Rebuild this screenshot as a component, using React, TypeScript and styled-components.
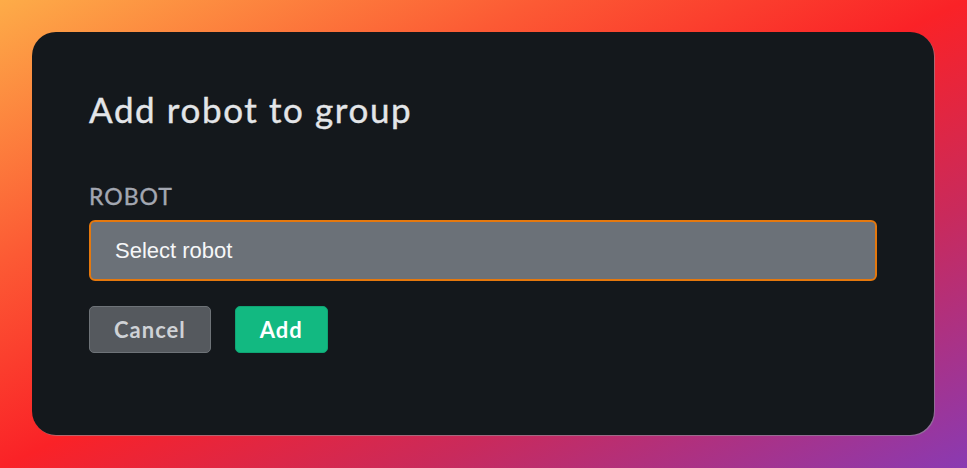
import React from 'react';
import styled, { createGlobalStyle } from 'styled-components';

const GlobalStyle = createGlobalStyle`
  html, body {
    margin: 0;
    padding: 0;
  }
  body {
    font-family: Lato, 'Noto Sans', sans-serif;
  }
  * {
    box-sizing: border-box;
  }
`;

const Backdrop = styled.div`
  width: 967px;
  height: 468px;
  padding: 32px 33px 33px 32px;
  background: linear-gradient(
    to bottom right,
    #fdac48 0%,
    #fc5a34 28%,
    #fa2227 50%,
    #c92a5c 72%,
    #8a3ab2 100%
  );
`;

const Card = styled.section`
  height: 100%;
  background: #14181c;
  border-radius: 24px;
  box-shadow: 1px 1px 0 rgba(140, 145, 152, 0.6);
  padding: 55px 57px 0 57px;
  display: flex;
  flex-direction: column;
`;

const Title = styled.h2`
  margin: 0;
  font-size: 35px;
  line-height: 44px;
  font-weight: 400;
  letter-spacing: 1.6px;
  color: #e3e5e8;
  -webkit-text-stroke: 0.4px #e3e5e8;
`;

const Label = styled.label`
  margin-top: 51px;
  font-size: 23px;
  line-height: 28px;
  font-weight: 400;
  letter-spacing: 1px;
  color: #a3a7b1;
  -webkit-text-stroke: 0.4px #a3a7b1;
`;

const Select = styled.div`
  margin-top: 10px;
  height: 61px;
  display: flex;
  align-items: center;
  padding: 0 24px;
  background: #6b7178;
  border: 2px solid #e5780d;
  border-radius: 6px;
  font-family: 'Liberation Sans', Arial, sans-serif;
  font-size: 22px;
  color: #f6f7f8;
`;

const Actions = styled.div`
  margin-top: 25px;
  display: flex;
  gap: 24px;
`;

const Button = styled.button<{ $primary?: boolean }>`
  height: 47px;
  padding: 0 24px;
  border-radius: 5px;
  font-family: Lato, 'Noto Sans', sans-serif;
  font-size: 22px;
  font-weight: 700;
  letter-spacing: 1px;
  color: ${(p) => (p.$primary ? '#ffffff' : '#cfd2d6')};
  background: ${(p) => (p.$primary ? '#12b981' : '#55595e')};
  border: 1.5px solid ${(p) => (p.$primary ? '#0fa574' : '#6e7378')};
  cursor: pointer;
`;

const App = () => {
  return (
    <>
      <GlobalStyle />
      <Backdrop>
        <Card>
          <Title>Add robot to group</Title>
          <Label>ROBOT</Label>
          <Select>Select robot</Select>
          <Actions>
            <Button>Cancel</Button>
            <Button $primary>Add</Button>
          </Actions>
        </Card>
      </Backdrop>
    </>
  );
};

export default App;
